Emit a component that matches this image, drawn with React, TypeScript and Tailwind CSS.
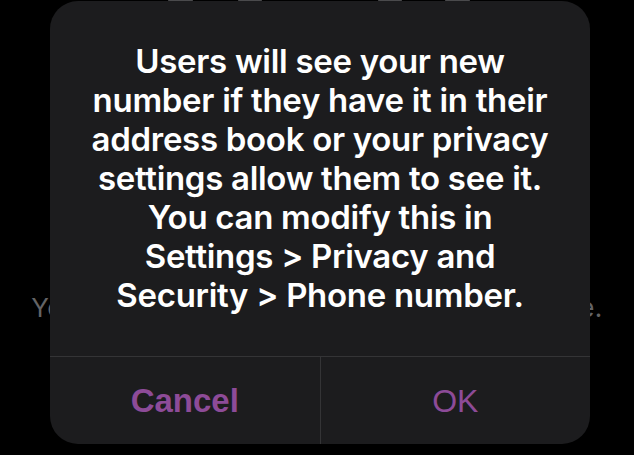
// App.tsx

const lines = [
	"Users will see your new",
	"number if they have it in their",
	"address book or your privacy",
	"settings allow them to see it.",
	"You can modify this in",
	"Settings > Privacy and",
	"Security > Phone number.",
];

function Backdrop() {
	return (
		<div className="flex flex-col h-full">
			<div className="flex h-[2px]">
				<div className="ml-[168px] w-[25px] rounded-b bg-[#4a4a4c]" />
				<div className="ml-[45px] w-[24px] rounded-b bg-[#4a4a4c]" />
				<div className="ml-[116px] w-[24px] rounded-b bg-[#4a4a4c]" />
				<div className="ml-[43px] w-[25px] rounded-b bg-[#4a4a4c]" />
			</div>
			<p className="mt-[290px] text-center text-[26px] leading-[32px] text-[#636365] font-['Inter',sans-serif] tracking-[0.45px]">
				You can change your Telegram number here.
			</p>
		</div>
	);
}

function Alert() {
	return (
		<div className="absolute left-[50px] top-[1px] w-[540px] h-[443px] rounded-[28px] bg-[#1c1c1e] flex flex-col overflow-hidden">
			<div className="flex-1 flex items-center justify-center">
				<p className="text-center text-white font-semibold text-[33px] leading-[39px] font-['Inter',sans-serif] tracking-[-0.3px]">
					{lines.map((l) => (
						<span key={l} className="block">
							{l}
						</span>
					))}
				</p>
			</div>
			<div className="h-px bg-[#343436]" />
			<div className="h-[87px] flex font-['Liberation_Sans',Arial,sans-serif] text-[#8d4b98]">
				<button className="flex-1 flex items-center justify-center font-bold text-[33px]">
					Cancel
				</button>
				<div className="w-px bg-[#343436]" />
				<button className="flex-1 flex items-center justify-center text-[32px]">
					OK
				</button>
			</div>
		</div>
	);
}

export default function App() {
	return (
		<div className="relative w-full h-[455px] bg-black overflow-hidden">
			<Backdrop />
			<Alert />
		</div>
	);
}
